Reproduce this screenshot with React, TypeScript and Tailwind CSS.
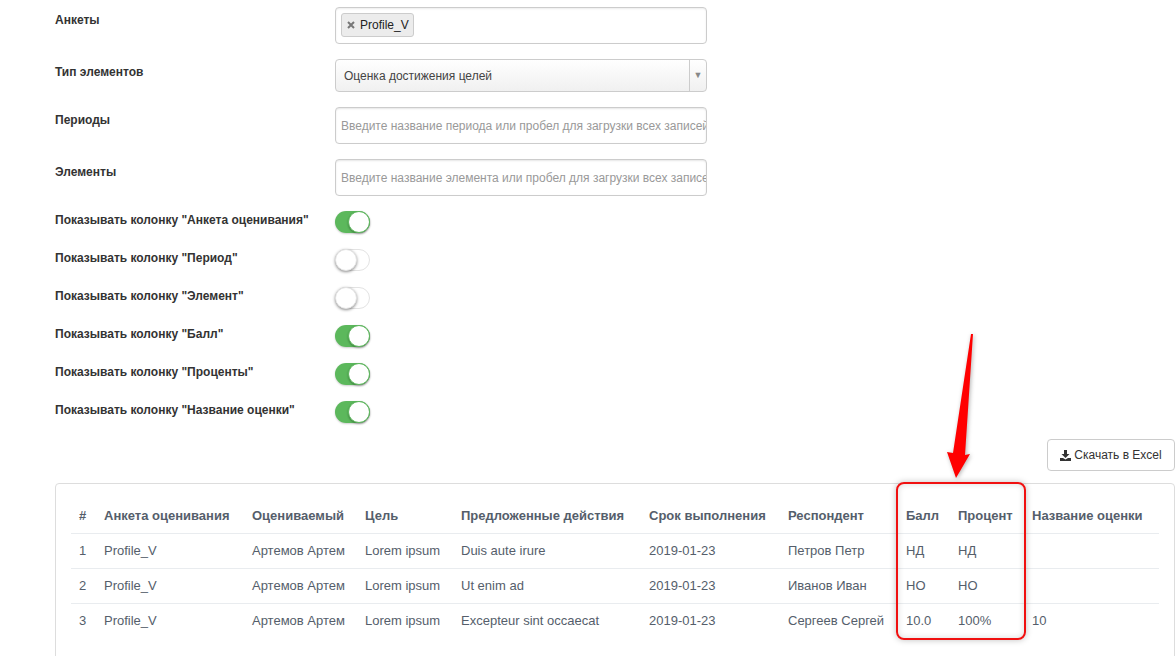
const toggles = [
  { label: 'Показывать колонку "Анкета оценивания"', on: true },
  { label: 'Показывать колонку "Период"', on: false },
  { label: 'Показывать колонку "Элемент"', on: false },
  { label: 'Показывать колонку "Балл"', on: true },
  { label: 'Показывать колонку "Проценты"', on: true },
  { label: 'Показывать колонку "Название оценки"', on: true },
]

const rows = [
  ['1', 'Profile_V', 'Артемов Артем', 'Lorem ipsum', 'Duis aute irure', '2019-01-23', 'Петров Петр', 'НД', 'НД', ''],
  ['2', 'Profile_V', 'Артемов Артем', 'Lorem ipsum', 'Ut enim ad', '2019-01-23', 'Иванов Иван', 'НО', 'НО', ''],
  ['3', 'Profile_V', 'Артемов Артем', 'Lorem ipsum', 'Excepteur sint occaecat', '2019-01-23', 'Сергеев Сергей', '10.0', '100%', '10'],
]

const heads = ['#', 'Анкета оценивания', 'Оцениваемый', 'Цель', 'Предложенные действия', 'Срок выполнения', 'Респондент', 'Балл', 'Процент', 'Название оценки']
const widths = [25, 148, 113, 96, 188, 139, 118, 52, 74, 135]

function Toggle({ on }: { on: boolean }) {
  return (
    <div className={on
      ? 'w-[35px] h-[22px] rounded-full bg-[#5cb85c] flex justify-end shadow-[0_1px_2px_rgba(0,0,0,0.2)]'
      : 'w-[35px] h-[22px] rounded-full bg-white border border-[#e3e3e3] flex justify-start'}
    >
      <div className={on
        ? 'w-[22px] h-[22px] rounded-full bg-white border border-[#5cb85c] shadow-[0_1px_2px_rgba(0,0,0,0.3)]'
        : 'w-[22px] h-[22px] -m-px rounded-full bg-white border border-[#e3e3e3] shadow-[0_1px_3px_rgba(0,0,0,0.45)]'}
      />
    </div>
  )
}

function Placeholder({ text }: { text: string }) {
  return (
    <div className="w-[372px] h-[37px] rounded border border-[#ccc] bg-white shadow-[inset_0_1px_2px_rgba(0,0,0,0.1)] flex items-center pl-[5px] overflow-hidden">
      <span className="text-[12px] text-[#999] whitespace-nowrap">{text}</span>
    </div>
  )
}

export default function App() {
  return (
    <div className="relative w-[1175px] h-[656px] overflow-hidden bg-white text-[#333] font-['Liberation_Sans',Arial,sans-serif]">
      <div className="pl-[55px] pt-[7px]">
        {/* Filters */}
        <div className="flex h-[52px]">
          <label className="w-[280px] text-[12px] font-bold pt-[5px] leading-4">Анкеты</label>
          <div className="w-[372px] h-[37px] rounded border border-[#ccc] bg-white shadow-[inset_0_1px_2px_rgba(0,0,0,0.08)] pl-[5px] pt-[4px]">
            <div className="inline-flex items-center h-[24px] pl-[5px] pr-[4px] gap-[5px] rounded-[3px] border border-[#ccc] bg-[#ececec] text-[12px] text-[#222]">
              <svg width="8" height="8" viewBox="0 0 8 8" className="mt-[1px]">
                <path d="M1 1 L7 7 M7 1 L1 7" stroke="#777" strokeWidth="2" />
              </svg>
              Profile_V
            </div>
          </div>
        </div>
        <div className="flex h-[48px]">
          <label className="w-[280px] text-[12px] font-bold pt-[5px] leading-4">Тип элементов</label>
          <div className="w-[372px] h-[33px] rounded border border-[#ccc] bg-gradient-to-b from-white to-[#f0f0f0] flex items-center">
            <span className="flex-1 pl-[8px] text-[12px] text-[#444]">Оценка достижения целей</span>
            <div className="w-[17px] h-full border-l border-[#ccc] flex items-center justify-center text-[#888] text-[9px]">▼</div>
          </div>
        </div>
        <div className="flex h-[52px]">
          <label className="w-[280px] text-[12px] font-bold pt-[5px] leading-4">Периоды</label>
          <Placeholder text="Введите название периода или пробел для загрузки всех записей" />
        </div>
        <div className="flex h-[52px]">
          <label className="w-[280px] text-[12px] font-bold pt-[5px] leading-4">Элементы</label>
          <Placeholder text="Введите название элемента или пробел для загрузки всех записей" />
        </div>

        {/* Column toggles */}
        <div className="flex flex-col">
          {toggles.map((t) => (
            <div key={t.label} className="flex h-[38px]">
              <label className="w-[280px] text-[12px] font-bold leading-4 pt-[1px]">{t.label}</label>
              <Toggle on={t.on} />
            </div>
          ))}
        </div>
      </div>

      <div className="flex justify-end">
        <button className="w-[128px] h-[32px] rounded border border-[#ccc] bg-white text-[12px] text-[#333] flex items-center justify-center gap-[3px]">
          <svg width="11" height="11" viewBox="0 0 11 11">
            <path d="M4 0 H7 V4 H9.5 L5.5 8 L1.5 4 H4 Z M0 8 H3 L5.5 9.5 L8 8 H11 V11 H0 Z" fill="#333" />
          </svg>
          Скачать в Excel
        </button>
      </div>

      {/* Results */}
      <div className="ml-[55px] mt-[12px] h-[300px] rounded-t border border-[#ddd] pl-[15px] pr-[15px] pt-[14px]">
        <table className="border-collapse table-fixed text-[13px] text-[#555e6b]" style={{ width: 1088 }}>
          <colgroup>
            {widths.map((w, i) => <col key={i} style={{ width: w }} />)}
          </colgroup>
          <thead>
            <tr className="h-[35px] border-b border-[#e9ecef]">
              {heads.map((h) => (
                <th key={h} className="pl-[8px] text-left font-bold whitespace-nowrap">{h}</th>
              ))}
            </tr>
          </thead>
          <tbody>
            {rows.map((r) => (
              <tr key={r[0]} className="h-[35px] border-b border-[#e9ecef] last:border-b-0">
                {r.map((c, i) => (
                  <td key={i} className="pl-[8px] whitespace-nowrap">{c}</td>
                ))}
              </tr>
            ))}
          </tbody>
        </table>
      </div>

      {/* Annotation */}
      <div className="absolute left-[896px] top-[482px] w-[130px] h-[158px] rounded-lg border-2 border-[#f01010] shadow-[0_0_6px_rgba(0,0,0,0.25),inset_0_0_6px_rgba(0,0,0,0.15)]" />
      <svg className="absolute left-[940px] top-[330px] drop-shadow-[1px_1px_2px_rgba(0,0,0,0.3)]" width="40" height="150" viewBox="0 0 40 150">
        <path d="M31 4 L33 4 L25 125 L30 124 L16 148 L7 122 L13 123 Z" fill="#ff0000" />
      </svg>
    </div>
  )
}
